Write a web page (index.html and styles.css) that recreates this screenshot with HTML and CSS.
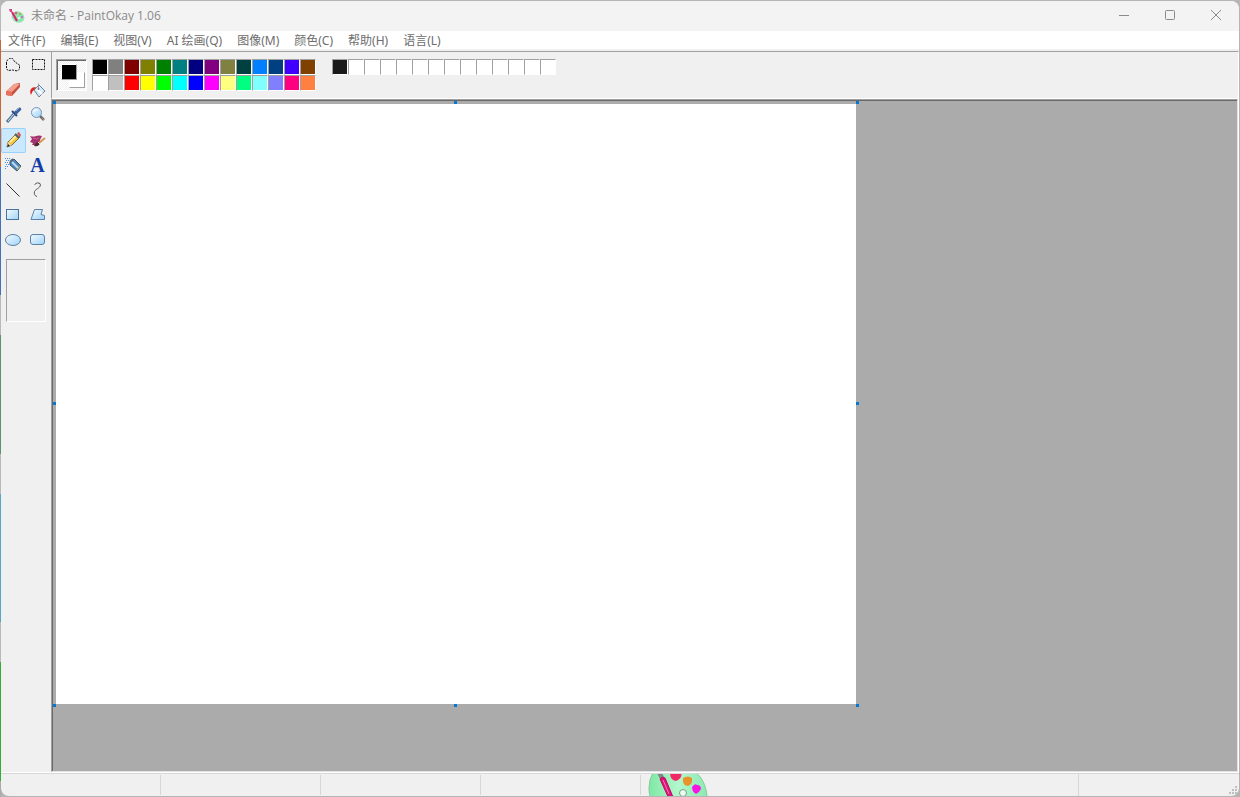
FILE: index.html
```
<!DOCTYPE html>
<html lang="zh-CN">
<head>
<meta charset="utf-8">
<title>未命名 - PaintOkay 1.06</title>
<link rel="stylesheet" href="styles.css">
</head>
<body>
<svg class="defs" aria-hidden="true">
  <defs>
    <linearGradient id="sky" x1="0" y1="0" x2="1" y2="1"><stop offset="0" stop-color="#f4fbff"/><stop offset="1" stop-color="#9fd3fa"/></linearGradient>
    <linearGradient id="mint" x1="0" y1="0" x2="1" y2="0"><stop offset="0" stop-color="#7fe8a4"/><stop offset=".5" stop-color="#b2f7cd"/><stop offset="1" stop-color="#8ceab0"/></linearGradient>
    <symbol id="logo" viewBox="0 0 60 50">
      <path d="M5-1Q1 5 1 14c0 18 12 32 30 33 17 0 29-12 28-25C58 12 54 3 48-1Z" fill="url(#mint)" stroke="#86c99d"/>
      <circle cx="35" cy="19" r="3.500" fill="#eff8f1" stroke="#6aa981"/>
      <path d="M22-1h11q2 5-5 8-6-1-6-8Z" fill="#f32965"/>
      <path d="M35 4q5-3 9 0 1 6-4 8-6-1-5-8Z" fill="#e99229"/>
      <path d="M44 13q3-4 5-2 4 0 4 4-2 4-5 5-4-2-4-7Z" fill="#fa14e3"/>
      <path d="M9-1h5l2 4-4 2Z" fill="#7f8887"/>
      <path d="M12 5q2-3 5-1l8 19q-1 4-4 2Z" fill="#e20f78" stroke="#b51262"/>
      <path d="m15 6 6 14" stroke="#ff78b9"/>
    </symbol>
  </defs>
</svg>
<div class="window">
  <header class="titlebar">
    <svg class="app-icon" viewBox="0 0 16 16"><ellipse cx="9" cy="9" rx="6.500" ry="5.500" transform="rotate(25 9 9)" fill="#8ce9ad"/><circle cx="7" cy="5" r="1.300" fill="#e85d76"/><circle cx="11" cy="6" r="1.200" fill="#b9a65c"/><circle cx="13" cy="9" r="1.200" fill="#d86ad0"/><circle cx="10" cy="10" r="1" fill="#fff"/><path d="m3 4 5 9" stroke="#e31c72" stroke-width="2"/><path d="M0 1h3v3H1z" fill="#d3417f"/></svg>
    <h1 class="title">未命名 - PaintOkay 1.06</h1>
    <div class="controls">
      <button class="control" aria-label="最小化"><svg viewBox="0 0 12 12"><path d="M1 5.500h10"/></svg></button>
      <button class="control" aria-label="最大化"><svg viewBox="0 0 12 12"><rect x="1.500" y=".5" width="9" height="9" rx="1"/></svg></button>
      <button class="control" aria-label="关闭"><svg viewBox="0 0 12 12"><path d="m1 0 10 10M11 0 1 10"/></svg></button>
    </div>
  </header>
  <nav class="menu">
    <button>文件(F)</button><button>编辑(E)</button><button>视图(V)</button><button>AI 绘画(Q)</button><button>图像(M)</button><button>颜色(C)</button><button>帮助(H)</button><button>语言(L)</button>
  </nav>
  <div class="body">
    <aside class="toolbox">
      <div class="tools">
        <button class="tool" aria-label="任意形状选择"><svg viewBox="0 0 25 25"><path d="M5.500 11V8l3-2.500h3L14 9l4.500 3v4l-2 2-5-1-4.500.5-1.500-2Z" fill="none" stroke="#111" stroke-dasharray="2 1"/></svg></button>
        <button class="tool" aria-label="选择"><svg viewBox="0 0 25 25"><rect x="6.500" y="6.500" width="12" height="10" fill="none" stroke="#111" stroke-dasharray="2 1"/></svg></button>
        <button class="tool" aria-label="橡皮擦"><svg viewBox="0 0 25 25"><path d="m5 14 8-8 6-1v4l-8 9-6-1Z" fill="#c4503f"/><path d="m5 13 8-7 6 0-8 8Z" fill="#f4a08d"/><path d="m5 13 6 1v4l-6-1Z" fill="#e8705c"/></svg></button>
        <button class="tool" aria-label="填充"><svg viewBox="0 0 25 25"><path d="m8 12 5-5 6 6-6 6Z" fill="#d5e9f8" stroke="#6c8195"/><path d="m11 11 5 5" stroke="#fff" stroke-width="2"/><path d="M12.500 11V5.500" stroke="#8f9aa6"/><circle cx="12.500" cy="11" r="1" fill="#66798c"/><path d="M5 17c-2-5 0-8 5-8l-2 3c-2 1-2 3-3 5Z" fill="#dd2421"/></svg></button>
        <button class="tool" aria-label="取色"><svg viewBox="0 0 25 25"><path d="m6 19 7-8" stroke="#527394" stroke-width="3"/><path d="m7 18 6-7" stroke="#d6effc"/><path d="m11 8 5 5" stroke="#2b4880" stroke-width="2"/><path d="m13 9 4-4q2-1 3 0 1 2-1 3l-4 4Z" fill="#3c62a3"/><path d="m15 8 3-3" stroke="#86a7d8"/></svg></button>
        <button class="tool" aria-label="缩放"><svg viewBox="0 0 25 25"><path d="m14 13 4 4" stroke="#686d77" stroke-width="2.500"/><path d="m16 15 2 2" stroke="#d78441"/><circle cx="10.500" cy="9.500" r="5" fill="url(#sky)" stroke="#7993b5"/><path d="M7.500 9q1-3 4-2" fill="none" stroke="#fff"/></svg></button>
        <button class="tool selected" aria-label="铅笔" aria-pressed="true"><svg viewBox="0 0 25 25"><path d="m6 19 1-5 8-8 4 3-8 8Z" fill="#f3c43c" stroke="#8a6a32"/><path d="m9 14 6-6" stroke="#fff0a0" stroke-width="2"/><path d="m6 19 1-5 4 3Z" fill="#ecd6a2"/><path d="m6 19 1-3 2 2Z" fill="#222"/><path d="m14 6 4 4" stroke="#53606c" stroke-width="2"/><path d="m16 5 2-1 2 3-1 2Z" fill="#db5148"/></svg></button>
        <button class="tool" aria-label="刷子"><svg viewBox="0 0 25 25"><path d="M4 8q4 1 6 0 3-1 6 0l-2 4-1 4-3 1-4 0 1-2-3-1 2-3Z" fill="#a2316d"/><path d="M7 10q4 2 6 0" fill="none" stroke="#c86296"/><path d="m13 15 6-5" stroke="#d9954f" stroke-width="2"/><path d="M8 18q1-3 4-4 3 1 1 3-2 2-5 1Z" fill="#4a2b25"/><path d="m12 14 2 2" stroke="#e8e0d0"/></svg></button>
        <button class="tool" aria-label="喷枪"><svg viewBox="0 0 25 25"><path d="m9 9 4-3 7 7-4 5-7-6Z" fill="#4f86ba" stroke="#3c5572"/><path d="m11 9 6 6" stroke="#b9dcf2" stroke-width="2"/><path d="m16 17 3-4" stroke="#d6b653"/><path d="m9 9 3-3" stroke="#5a6570" stroke-width="2"/><path d="M4 5.500h5M5 7.500h4M4 9.500h4M5 11.500h3M4 13.500h3M4 15.500h1" stroke="#3f8fee" stroke-dasharray="1 1"/></svg></button>
        <button class="tool letter" aria-label="文字">A</button>
        <button class="tool" aria-label="直线"><svg viewBox="0 0 25 25"><path d="m5.500 5.500 13 13" stroke="#333"/></svg></button>
        <button class="tool" aria-label="曲线"><svg viewBox="0 0 25 25"><path d="M8.500 6.500q3-3 5.500-1c2 4-4 5-5.500 8q-1 4 2.500 5" fill="none" stroke="#555"/></svg></button>
        <button class="tool" aria-label="矩形"><svg viewBox="0 0 25 25"><rect x="5.500" y="6.500" width="12" height="10" fill="url(#sky)" stroke="#48749b"/></svg></button>
        <button class="tool" aria-label="多边形"><svg viewBox="0 0 25 25"><path d="m5 16.500 3.500-10h8l-1.500 5 3.500 1v4Z" fill="url(#sky)" stroke="#5a82a6"/></svg></button>
        <button class="tool" aria-label="椭圆"><svg viewBox="0 0 25 25"><ellipse cx="12" cy="12" rx="7.500" ry="5.500" fill="url(#sky)" stroke="#5a82a6"/></svg></button>
        <button class="tool" aria-label="圆角矩形"><svg viewBox="0 0 25 25"><rect x="4.500" y="6.500" width="14" height="10" rx="2.500" fill="url(#sky)" stroke="#5a82a6"/></svg></button>
      </div>
      <div class="options"></div>
    </aside>
    <main class="main">
      <section class="colors" aria-label="颜色">
        <div class="current"><span class="back"></span><span class="fore"></span></div>
        <div class="palette" id="palette"></div>
        <div class="palette custom" id="custom"></div>
      </section>
      <section class="workspace">
        <div class="sheet">
          <canvas class="paper"></canvas>
          <i class="handle top left"></i><i class="handle top center"></i><i class="handle top right"></i>
          <i class="handle middle left"></i><i class="handle middle right"></i>
          <i class="handle bottom left"></i><i class="handle bottom center"></i><i class="handle bottom right"></i>
        </div>
      </section>
    </main>
  </div>
  <footer class="status">
    <span class="pane"></span><span class="pane"></span><span class="pane"></span><span class="pane"></span>
    <span class="pane brand"><svg viewBox="0 0 60 50"><use href="#logo"/></svg></span>
    <span class="last"><svg class="grip" viewBox="0 0 8 8"><path d="M6 0h2v2H6zM3 3h2v2H3zM6 3h2v2H6zM0 6h2v2H0zM3 6h2v2H3zM6 6h2v2H6z"/></svg></span>
  </footer>
</div>
<script src="palette.js"></script>
</body>
</html>
```

FILE: styles.css
```
* { box-sizing: border-box; }
body {
  margin: 0;
  height: 100vh;
  padding: 1px;
  background: linear-gradient(#b9b9b9 0 5%, #c4683a 5% 21%, #4472b8 21% 37%, #b9b9b9 37% 42%, #5d9270 42% 57%, #b9b9b9 57% 62%, #58a7bd 62% 78%, #b9b9b9 78% 83%, #35ad35 83% 98%, #aaa 98%) left / 1px 100% no-repeat, #b5b5b5;
  font: 12px/18px "Noto Sans", "Noto Sans CJK SC", sans-serif;
  overflow: hidden;
}
button { border: 0; padding: 0; margin: 0; background: none; color: inherit; font: inherit; }
.defs { position: absolute; width: 0; height: 0; }
.window { height: 100%; display: flex; flex-direction: column; background: #f0f0f0; border-radius: 8px; overflow: hidden; }
.titlebar { flex: none; height: 30px; display: flex; align-items: center; padding-left: 8px; background: #f3f3f3; }
.app-icon { width: 16px; height: 16px; }
.title { flex: 1; margin: 0 0 0 6px; font: 400 12px/18px "Open Sans", "Noto Sans CJK SC", sans-serif; color: #8a8a8a; }
.controls { display: flex; height: 100%; }
.control { width: 46px; display: grid; place-items: center; }
.control svg { width: 12px; height: 12px; fill: none; stroke: #8a8a8a; }
.menu { flex: none; display: flex; gap: 15px; height: 18px; margin-bottom: 2px; padding-left: 7px; background: #fff; color: #6d6d6d; white-space: nowrap; }
.menu button { line-height: 20px; }
.body { flex: 1; min-height: 0; display: flex; border-top: 1px solid #a0a0a0; border-right: 1px solid #fff; border-bottom: 1px solid #fff; }
.toolbox { flex: none; width: 50px; padding-top: 1px; }
.tools { display: grid; grid-template-columns: 25px 25px; grid-auto-rows: 25px; }
.tool svg { display: block; width: 25px; height: 25px; }
.tool.selected { background: #cce8ff; box-shadow: inset 0 0 0 1px #99d1ff; border-radius: 2px; }
.letter { padding-right: 2px; font: bold 20px/25px "Liberation Serif", serif; color: #123da8; }
.options { height: 63px; margin: 6px 5px; border: 1px solid; border-color: #a0a0a0 #fff #fff #a0a0a0; }
.main { flex: 1; min-width: 0; display: flex; flex-direction: column; }
.colors { flex: none; height: 47px; display: flex; align-items: flex-start; padding: 7px 4px; border-left: 1px solid #a0a0a0; border-bottom: 1px solid #fff; }
.current {
  position: relative; width: 31px; height: 32px; margin-right: 5px;
  border: 1px solid; border-color: #a0a0a0 #fff #fff #a0a0a0;
  box-shadow: inset 1px 1px #696969;
  background: repeating-conic-gradient(#efefef 0 25%, #fff 0 50%) 0 0 / 2px 2px;
}
.fore, .back { position: absolute; width: 16px; height: 16px; border: 1px solid; }
.fore { left: 4px; top: 4px; background: #000; border-color: #fff #a0a0a0 #a0a0a0 #fff; }
.back { left: 12px; top: 12px; background: #fff; border-color: #fff #a0a0a0 #a0a0a0 #fff; }
.palette { display: grid; grid-template-columns: repeat(14, 16px); grid-auto-rows: 16px; }
.custom { margin-left: 16px; }
.swatch { border: 1px solid; border-color: #a0a0a0 #fff #fff #a0a0a0; }
.workspace { flex: 1; min-height: 0; overflow: hidden; background: #ababab; border: 1px solid; border-color: #a0a0a0 #e3e3e3 #e3e3e3 #a0a0a0; box-shadow: inset 1px 1px #696969; padding: 1px; }
.sheet { position: relative; width: 806px; height: 606px; padding: 3px; }
.paper { display: block; width: 800px; height: 600px; background: #fff; }
.handle { position: absolute; width: 3px; height: 3px; background: #0078d7; }
.top { top: 0; }
.middle { top: 301px; }
.bottom { bottom: 0; }
.left { left: 0; }
.center { left: 401px; }
.right { right: 0; }
.status { flex: none; height: 23px; display: flex; border-top: 1px solid #d7d7d7; }
.pane { width: 160px; margin: 1px 0; border-right: 1px solid #d7d7d7; }
.brand { flex: 1; margin: 0; padding-left: 7px; overflow: hidden; }
.brand svg { display: block; width: 60px; height: 50px; }
.last { width: 160px; display: flex; align-items: flex-end; justify-content: flex-end; padding: 2px; }
.grip { width: 8px; height: 8px; fill: #bfbfbf; }
```

FILE: palette.js
```
const base = [
  "#000000", "#808080", "#800000", "#808000", "#008000", "#008080", "#000080",
  "#800080", "#808040", "#004040", "#0080ff", "#004080", "#4000ff", "#804000",
  "#ffffff", "#c0c0c0", "#ff0000", "#ffff00", "#00ff00", "#00ffff", "#0000ff",
  "#ff00ff", "#ffff80", "#00ff80", "#80ffff", "#8080ff", "#ff0080", "#ff8040"
];
const custom = ["#1a1a1a", ...Array(13).fill("#ffffff")];

function fill(id, colors) {
  const box = document.getElementById(id);
  for (const color of colors) {
    const swatch = document.createElement("button");
    swatch.className = "swatch";
    swatch.style.backgroundColor = color;
    swatch.setAttribute("aria-label", color);
    box.append(swatch);
  }
}

fill("palette", base);
fill("custom", custom);
```
